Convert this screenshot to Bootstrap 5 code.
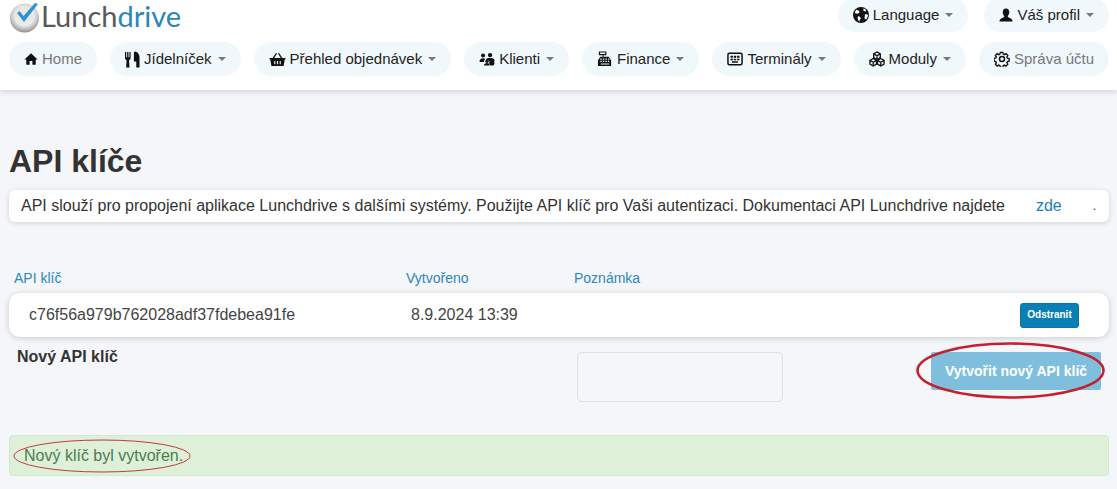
<!DOCTYPE html>
<html lang="cs">
<head>
<meta charset="utf-8">
<title>API klíče</title>
<link href="https://cdn.jsdelivr.net/npm/bootstrap@5.3.0/dist/css/bootstrap.min.css" rel="stylesheet">
<style>
html,body{height:100%;}
body{background:#f4f6fa;font-family:"Liberation Sans",Arial,sans-serif;color:#333;font-size:16px;overflow:hidden;}
.site-head{background:#fff;height:90px;box-shadow:0 2px 6px rgba(0,0,0,.14);padding:0 8px 0 9px;}
.top-line{height:42px;}
.brand-mark{display:flex;align-items:flex-start;height:36px;}
.brand-text{font-family:Lato,sans-serif;font-size:29px;line-height:32px;color:#58595b;margin-left:-1px;}
.brand-text span{color:#2d86b9;}
.pill-btn{background:#f1f8fb;border:0;border-radius:17px;height:34px;padding:0 15px;font-size:15px;line-height:34px;color:#222;display:flex;align-items:center;gap:4px;white-space:nowrap;}
.pill-btn svg{flex:none;fill:#111;}
.pill-btn.muted-pill{color:#777;}
.pill-btn.dropdown-toggle::after{color:#777;margin-left:2px;border-top-width:.3em;border-right-width:.3em;border-left-width:.3em;}
.top-pill{margin-top:-2px;}
.page-body{padding:0 8px 0 9px;}
.page-title{font-size:32px;font-weight:700;line-height:38px;margin:52px 0 10px;color:#333;}
.info-strip{background:#fff;height:32px;border-radius:6px;box-shadow:0 1px 5px rgba(0,0,0,.16);padding:0 12px;line-height:32px;}
.info-strip a{color:#1a80b6;text-decoration:none;}
.zde-link{margin-left:31px;}
.dot-end{margin-left:31px;font-size:13px;}
.col-heads{height:71px;display:grid;grid-template-columns:392px 168px 1fr;padding:0 0 0 5px;align-items:end;font-size:14px;line-height:16px;color:#2f86b9;}
.col-heads>div{padding-bottom:7px;}
.key-row{background:#fff;height:44px;border-radius:11px;box-shadow:0 1px 6px rgba(0,0,0,.18);display:grid;grid-template-columns:382px 1fr auto;align-items:center;padding:0 30px 0 20px;font-size:16px;color:#444;}
.del-btn{background:#0a7fb5;color:#fff;border:1px solid #0a75a8;border-radius:3px;font-size:10px;font-weight:700;height:25px;width:59px;padding:0;line-height:22px;}
.new-key{display:flex;height:98px;padding-top:15px;}
.new-label{font-weight:700;width:568px;padding-left:8px;line-height:8px;padding-top:1px;color:#333;}
.note-box{width:206px;height:50px;background:transparent;border:1px solid #dcdfe3;border-radius:5px;}
.create-wrap{position:relative;margin-left:148px;width:170px;height:38px;}
.create-btn{width:100%;height:38px;background:#7fbfdd;border:0;border-radius:2px;color:#fff;font-weight:700;font-size:14px;padding:0;}
.create-oval{position:absolute;left:-15px;top:-10px;width:190px;height:57px;overflow:visible;}
.ok-alert{position:relative;background:#dff0d8;border:1px solid #d6e9c6;border-radius:4px;height:41px;color:#4a7d51;padding:0 14px;line-height:39px;font-size:16px;}
.ok-oval{position:absolute;left:3px;top:3px;width:178px;height:34px;overflow:visible;}
</style>
</head>
<body>
<svg width="0" height="0" class="position-absolute">
<defs>
<symbol id="i-home" viewBox="0 0 16 16"><path d="M8 1.500 15.500 8.600H13.400V14.500H9.600V10.200H6.400V14.500H2.600V8.600H.5z"/></symbol>
<symbol id="i-food" viewBox="0 0 16 18"><path d="M0 1h1.300v5.500h1V1h1.400v5.500h1V1H6v6.500c0 1.200-.8 2-1.700 2.300L4.800 17.500H1.200L1.700 9.800C.8 9.500 0 8.700 0 7.500zM10.500.5c3 .3 5 3 5 6.500v10.500H12v-6.500H9.500V3c0-1.200.2-2.500 1-2.500z"/></symbol>
<symbol id="i-basket" viewBox="0 0 18 16"><path d="M.5 6.500h3.300L7.300 1l1.200.7-3 4.800h7l-3-4.800L10.700 1l3.500 5.500h3.300v1.600h-.8L15.500 15h-13L1.300 8.100H.5zM5.500 9.500v3.500h1.200V9.500zm2.900 0v3.500h1.200V9.500zm2.900 0v3.500h1.200V9.500z" fill-rule="evenodd"/></symbol>
<symbol id="i-users" viewBox="0 0 18 16"><circle cx="4.500" cy="4" r="2.300"/><circle cx="12.500" cy="3.500" r="2.500"/><path d="M.5 11c0-2.500 1.500-4 4-4 1 0 1.800.3 2.400.8C6 8.800 5.500 10 5.500 11.500H.5zM8 8c1-.8 2.800-1.200 4.500-1.200s3.700.5 5 1.700v2H12a3 3 0 0 0-4 .5z"/><circle cx="9" cy="10.500" r="2"/><path d="M5.500 15.500c0-2 1.500-3 3.500-3s3 1 3 3z"/><circle cx="14.500" cy="12.500" r="3"/></symbol>
<symbol id="i-cash" viewBox="0 0 17 17"><path d="M2 .5h8v4H7V6h5.500L15 10v6H1v-6l2.500-4H6V4.500H2zM3.200 1.700v1.600h5.600V1.700zM3.500 8v1.200H5V8zm2.700 0v1.200h1.500V8zm2.700 0v1.200h1.500V8zm2.700 0v1.200h1.400V8zM3.500 10.400v1.200H5v-1.200zm2.700 0v1.200h1.500v-1.200zm2.700 0v1.200h1.500v-1.200zm2.700 0v1.200h1.400v-1.200zM4 13.300v1h9v-1z" fill-rule="evenodd"/></symbol>
<symbol id="i-term" viewBox="0 0 16 14"><path d="M2.500 .5h11A2.200 2.200 0 0 1 15.800 2.700v8.600a2.200 2.200 0 0 1-2.300 2.200h-11A2.200 2.200 0 0 1 .2 11.300V2.700A2.200 2.200 0 0 1 2.500.5zm0 1.500a.8.8 0 0 0-.8.8v8.400c0 .5.300.8.800.8h11c.5 0 .8-.3.800-.8V2.800a.8.8 0 0 0-.8-.8zM3.500 3.800h2.400v2H3.500zm3.300 0h2.400v2H6.800zm3.300 0h2.400v2h-2.400zM3.500 6.700h2.400v1.600H3.500zm3.300 0h2.400v1.600H6.800zm3.300 0h2.400v1.600h-2.400zM5 9.300h6v1.500H5z" fill-rule="evenodd"/></symbol>
<symbol id="i-mods" viewBox="0 0 17 17"><g fill="none" stroke="#111" stroke-width="1.400"><path d="M8.500 1 12 3v4L8.500 9 5 7V3z"/><path d="M4.500 8 8 10v4l-3.500 2L1 14v-4z"/><path d="M12.500 8 16 10v4l-3.500 2L9 14v-4z"/><path d="M5 3l3.500 2L12 3M8.500 5v4M1 10l3.500 2L8 10M4.500 12v4M9 10l3.500 2 3.500-2M12.500 12v4"/></g></symbol>
<symbol id="i-gear" viewBox="0 0 16 16"><g fill="none" stroke="#111" stroke-width="1.500"><path d="M6.600 1h2.800l.4 2 1.300.6 1.800-1.100 2 2-1.100 1.800.6 1.300 2 .4v2.800l-2 .4-.6 1.300 1.100 1.800-2 2-1.800-1.100-1.300.6-.4 2H6.600l-.4-2-1.300-.6-1.800 1.100-2-2 1.100-1.800-.6-1.300-2-.4V7.600l2-.4.6-1.300L1.100 4.500l2-2 1.800 1.100 1.300-.6z" transform="translate(.4 .4) scale(.9)"/><circle cx="8" cy="8" r="2.500"/></g></symbol>
<symbol id="i-globe" viewBox="0 0 16 16"><circle cx="8" cy="8" r="8" fill="#111"/><path fill="#fff" d="M3.300 2.800 6 3.800l.5 1.700-1.800 1.300-2.900-.7c.1-1.200.7-2.300 1.500-3.300zM10.500 1.300l2.700 1.700-.7 1.500-2-.5zM12 7l3 .8c0 1.800-.7 3.500-2 4.700l-1.500-1zM5 9.300l2 .4.800 1.700-1.200 1.600-.2 1.700C4.500 13 4.300 11 5 9.300z"/></symbol>
<symbol id="i-user" viewBox="0 0 14 14"><path d="M7 .5c2 0 3.300 1.500 3.300 3.600S9.300 7.500 8.700 8.300c0 .7.600 1 2 1.600 1.500.6 2.800 1.200 2.800 3.600H.5c0-2.400 1.300-3 2.800-3.600 1.400-.6 2-.9 2-1.600C4.700 7.500 3.700 6.200 3.700 4.100S5 .5 7 .5z"/></symbol>
</defs>
</svg>

<header class="site-head d-flex flex-column">
  <div class="top-line d-flex justify-content-between">
    <div class="brand-mark">
      <svg width="33" height="34" viewBox="0 0 33 34">
        <defs>
          <radialGradient id="discFill" cx="50%" cy="40%" r="60%"><stop offset="0" stop-color="#f4f4f4"/><stop offset=".7" stop-color="#d5d5d5"/><stop offset="1" stop-color="#8f8f8f"/></radialGradient>
        </defs>
        <circle cx="15.500" cy="18" r="14.500" fill="url(#discFill)"/>
        <circle cx="15.500" cy="16" r="10.500" fill="#e9e9e9"/>
        <path d="M8 13l2.500-2 4 5L26 3l3 1-14 18z" fill="#2f93cf"/>
      </svg>
      <div class="brand-text">Lunch<span>drive</span></div>
    </div>
    <div class="d-flex" style="gap:16px">
      <button class="pill-btn top-pill dropdown-toggle"><svg width="16" height="16"><use href="#i-globe"/></svg>Language</button>
      <button class="pill-btn top-pill dropdown-toggle"><svg width="14" height="14"><use href="#i-user"/></svg>Váš profil</button>
    </div>
  </div>
  <nav class="d-flex justify-content-between">
    <button class="pill-btn muted-pill"><svg width="14" height="14"><use href="#i-home"/></svg>Home</button>
    <button class="pill-btn dropdown-toggle"><svg width="15" height="17"><use href="#i-food"/></svg>Jídelníček</button>
    <button class="pill-btn dropdown-toggle"><svg width="17" height="15"><use href="#i-basket"/></svg>Přehled objednávek</button>
    <button class="pill-btn dropdown-toggle"><svg width="16" height="14"><use href="#i-users"/></svg>Klienti</button>
    <button class="pill-btn dropdown-toggle"><svg width="16" height="16"><use href="#i-cash"/></svg>Finance</button>
    <button class="pill-btn dropdown-toggle"><svg width="16" height="14"><use href="#i-term"/></svg>Terminály</button>
    <button class="pill-btn dropdown-toggle"><svg width="16" height="16"><use href="#i-mods"/></svg>Moduly</button>
    <button class="pill-btn muted-pill"><svg width="16" height="16"><use href="#i-gear"/></svg>Správa účtu</button>
  </nav>
</header>

<main class="page-body">
  <h1 class="page-title">API klíče</h1>
  <div class="info-strip d-flex">
    <span>API slouží pro propojení aplikace Lunchdrive s dalšími systémy. Použijte API klíč pro Vaši autentizaci. Dokumentaci API Lunchdrive najdete</span>
    <a href="#" class="zde-link">zde</a><span class="dot-end">.</span>
  </div>
  <div class="col-heads"><div>API klíč</div><div>Vytvořeno</div><div>Poznámka</div></div>
  <div class="key-row">
    <div>c76f56a979b762028adf37fdebea91fe</div>
    <div>8.9.2024 13:39</div>
    <button class="del-btn">Odstranit</button>
  </div>
  <div class="new-key">
    <div class="new-label">Nový API klíč</div>
    <div class="note-box"></div>
    <div class="create-wrap">
      <button class="create-btn">Vytvořit nový API klíč</button>
      <svg class="create-oval" viewBox="0 0 190 57"><ellipse cx="94.500" cy="28.500" rx="93" ry="27" fill="none" stroke="#c4202e" stroke-width="2.600"/></svg>
    </div>
  </div>
  <div class="ok-alert">Nový klíč byl vytvořen.
    <svg class="ok-oval" viewBox="0 0 178 34"><ellipse cx="89" cy="17" rx="88" ry="16" fill="none" stroke="#c23a3a" stroke-width="1"/></svg>
  </div>
</main>
<script src="https://cdn.jsdelivr.net/npm/bootstrap@5.3.0/dist/js/bootstrap.bundle.min.js"></script>
</body>
</html>
